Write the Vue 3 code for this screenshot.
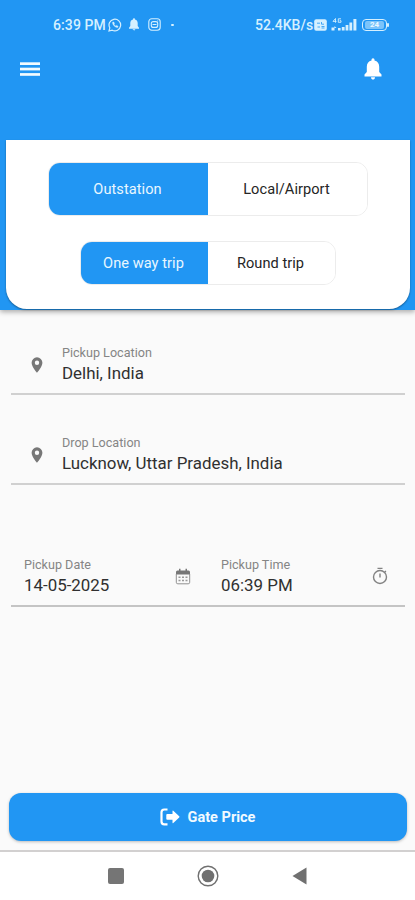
<script setup>
import { ref } from 'vue'

const area = ref('Outstation')
const trip = ref('One way trip')
const locations = [
  { label: 'Pickup Location', value: 'Delhi, India' },
  { label: 'Drop Location', value: 'Lucknow, Uttar Pradesh, India' },
]
</script>

<template>
  <div class="screen">
    <header class="top">
      <div class="status">
        <span class="clock">6:39 PM</span>
        <svg class="whatsapp" width="14" height="14" viewBox="0 0 14 14" fill="none" stroke="currentColor">
          <path d="M1 13l.8-3.1A5.8 5.8 0 1 1 4.2 12.2z" stroke-width="1.2" />
          <path d="M4.7 4.1c-.7 2.4 2.4 5.7 5 5.3l.4-1.2-1.6-.8-.8.6c-.8-.3-1.4-1-1.7-1.7l.5-.8-.7-1.5z" fill="currentColor" stroke-width=".4" />
        </svg>
        <svg class="mini-bell" width="10" height="13" viewBox="0 0 10 13" fill="currentColor">
          <path d="M5 .3c.7 0 1 .5 1 1.1 1.800.5 2.700 1.800 2.700 3.700v3L10 9.800v1H0v-1l1.300-1.700v-3C1.300 3.200 2.200 1.900 4 1.400 4 .8 4.300.3 5 .3zM3.700 11.200h2.600C6.300 12.800 3.700 12.800 3.700 11.200z" />
        </svg>
        <svg class="insta" width="13" height="13" viewBox="0 0 13 13" fill="none" stroke="currentColor" stroke-width="1.1">
          <rect x=".8" y=".8" width="11.4" height="11.4" rx="3" />
          <rect x="3.3" y="3.6" width="6.4" height="5.8" rx="2" />
          <path d="M4.5 6.5h4M9.2 3h1" />
        </svg>
        <i class="dot"></i>
        <span class="speed">52.4KB/s</span>
        <svg class="volte" width="13" height="12" viewBox="0 0 13 12">
          <rect x=".2" y=".2" width="12.6" height="11.6" rx="2" fill="currentColor" />
          <path d="M3 4.200h3M7.500 3v2.200H10M3.500 8H6M7.500 7.500h3M7.500 9h3" stroke="#2196f3" stroke-width=".8" fill="none" />
        </svg>
        <svg class="signal" width="26" height="14" viewBox="0 0 26 14" fill="currentColor">
          <path d="M4.500.5v4.200M4.500.5L2 3.400h3.500M10 .8H7.300v3.500H10V2.700H8.700" fill="none" stroke="currentColor" stroke-width=".9" />
          <path d="M.5 9.500h3V8l2 2h-2v2.500h-3zM7 10h2.600v2.500H7zM10.800 9h2.800v3.500h-2.800zM14.600 7h2.800v5.500h-2.800zM18.400 4.500h2.800v8h-2.800zM22.400 1h3v11.500h-3z" />
        </svg>
        <span class="battery"><b>24</b></span>
      </div>

      <div class="bar">
        <button class="plain" aria-label="Menu">
          <svg width="20" height="15" viewBox="0 0 20 15" fill="#f2fbff">
            <rect y=".3" width="20" height="2.700" /><rect y="5.700" width="20" height="2.700" /><rect y="11.100" width="20" height="2.700" />
          </svg>
        </button>
        <button class="plain" aria-label="Notifications">
          <svg width="18" height="22" viewBox="0 0 18 22" fill="#fff">
            <path d="M9 .3c1 0 1.500.7 1.500 1.700v.6c3.100.7 4.700 3 4.700 6.200v5.300l2.300 2.500v1.800H.5v-1.800l2.300-2.500V8.800c0-3.200 1.600-5.500 4.700-6.200V2C7.500 1 8 .3 9 .3zM7 19.200h4C11 22.300 7 22.300 7 19.200z" />
          </svg>
        </button>
      </div>

      <section class="card">
        <div class="toggle large">
          <button v-for="o in ['Outstation', 'Local/Airport']" :key="o" :class="{ on: area === o }" @click="area = o">{{ o }}</button>
        </div>
        <div class="toggle small">
          <button v-for="o in ['One way trip', 'Round trip']" :key="o" :class="{ on: trip === o }" @click="trip = o">{{ o }}</button>
        </div>
      </section>
    </header>

    <main class="form">
      <div v-for="l in locations" :key="l.label" class="field">
        <svg class="pin" width="12" height="16" viewBox="0 0 12 16" fill="#777">
          <path fill-rule="evenodd" d="M6 .3A5.400 5.400 0 0 0 .6 5.700C.6 9.700 6 15.700 6 15.700s5.400-6 5.400-10A5.400 5.400 0 0 0 6 .3zm0 3.300a2.200 2.200 0 1 1 0 4.400 2.200 2.200 0 0 1 0-4.400z" />
        </svg>
        <div class="text"><label>{{ l.label }}</label><p>{{ l.value }}</p></div>
      </div>

      <div class="when">
        <div class="text date"><label>Pickup Date</label><p>14-05-2025</p></div>
        <svg class="calendar" width="16" height="17" viewBox="0 0 16 17">
          <path d="M1 6.500V4q0-1.500 1.500-1.500H4V.8h1.500v1.700h5V.8H12v1.700h1.500Q15 2.500 15 4v2.500z" fill="#777" />
          <path d="M1.300 6v8.300q0 1.500 1.500 1.500h10.400q1.500 0 1.500-1.500V6" fill="none" stroke="#909090" />
          <path d="M3.500 9.200h9M3.500 12.500h9" stroke="#999" stroke-width="1.500" stroke-dasharray="2 1.500" />
        </svg>
        <div class="text time"><label>Pickup Time</label><p>06:39 PM</p></div>
        <svg class="timer" width="16" height="18" viewBox="0 0 16 18" fill="none" stroke="#828282" stroke-width="1.400">
          <circle cx="8" cy="10" r="6.500" />
          <path d="M5.500 1.400h5M12.600 5.200l1.300-1.300M8 6.500v4" />
        </svg>
      </div>
    </main>

    <div class="action">
      <button class="price">
        <svg width="20" height="18" viewBox="0 0 20 18">
          <path d="M7.500 1.500H4.300Q1.500 1.500 1.500 4.300v9.200q0 2.800 2.800 2.800h3.200" fill="none" stroke="#fff" stroke-width="2.200" />
          <path d="M7.200 6.100h5.300V3q0-.8.800-.3l5.900 5.600q.6.600 0 1.200l-5.900 5.600q-.8.500-.8-.3v-3.100H7.200q-.9 0-.9-.9V7q0-.9.900-.9z" fill="#fff" />
        </svg>
        <span>Gate Price</span>
      </button>
    </div>

    <nav class="system">
      <i class="square"></i>
      <svg class="home" width="22" height="22" viewBox="0 0 22 22">
        <circle cx="11" cy="11" r="9.800" fill="none" stroke="#707070" stroke-width="1.400" />
        <circle cx="11" cy="11" r="6.300" fill="#707070" />
      </svg>
      <svg class="back" width="15" height="18" viewBox="0 0 15 18"><path d="M.5 9L14.500.5v17z" fill="#707070" /></svg>
    </nav>
  </div>
</template>

<style>
body { margin: 0; }
</style>

<style scoped>
* { box-sizing: border-box; }
button { font: inherit; border: 0; margin: 0; padding: 0; cursor: pointer; }
p { margin: 0; }
svg { display: block; flex: none; }
.screen { width: 415px; height: 900px; overflow: hidden; display: flex; flex-direction: column; background: #fafafa; font-family: Roboto, sans-serif; }
.top { height: 310px; flex: none; padding: 14px 5px 0 6px; background: #2196f3; box-shadow: 0 2px 5px rgba(0, 0, 0, .32); }
.status { height: 22px; display: flex; align-items: center; padding-left: 47px; color: #d5f0ff; white-space: nowrap; }
.clock { width: 55px; font-size: 14px; font-weight: 500; letter-spacing: .1px; }
.whatsapp { margin-top: -1px; }
.mini-bell { margin-left: 7px; margin-top: -1px; }
.insta { margin-left: 9px; margin-top: -1px; }
.dot { width: 3px; height: 2px; margin-left: 10px; margin-top: -1px; border-radius: 1px; background: currentColor; }
.speed { width: 59px; margin-left: 81px; font-size: 14px; font-weight: 500; }
.volte { margin-left: 0; }
.signal { margin-left: 4px; margin-top: -1px; }
.battery { position: relative; width: 25px; height: 12px; margin-left: 5px; margin-top: -1px; border: 1px solid currentColor; border-radius: 4px; display: grid; place-items: center; }
.battery b { width: 19px; height: 8px; background: #7cc4fa; border-radius: 2px; color: #eaf8ff; font-size: 8px; line-height: 8px; text-align: center; }
.battery::after { content: ''; position: absolute; right: -3px; top: 3px; width: 2px; height: 4px; background: currentColor; border-radius: 1px; }
.bar { height: 66px; display: flex; justify-content: space-between; align-items: center; padding: 0 28px 0 14px; }
.plain { background: none; }
.card { height: 169px; margin-top: 38px; padding: 22px 42px 0 42px; display: flex; flex-direction: column; align-items: center; background: #fff; border-radius: 0 0 21px 21px; box-shadow: 0 1px 2px rgba(0, 0, 0, .4); }
.toggle { display: flex; border: 1px solid #ececec; border-radius: 12px; overflow: hidden; font-size: 14.6px; }
.toggle button { flex: 1; padding-right: 2px; background: #fff; color: #252525; letter-spacing: .05px; }
.toggle .on { background: #2196f3; color: #e9f7ff; }
.large { width: 320px; height: 54px; }
.small { width: 256px; height: 44px; margin-top: 25px; }
.form { flex: 1; padding: 30px 10px 0 11px; }
.field { height: 55px; display: flex; padding-left: 20px; border-bottom: 2px solid #d0d0d0; }
.field + .field { margin-top: 35px; }
.pin { margin-top: 17px; }
.field .text { margin-left: 19px; }
.text { padding-top: 5px; white-space: nowrap; }
.text label { display: block; font-size: 12.6px; line-height: 16px; color: #858585; }
.text p { font-size: 16.9px; line-height: 25px; color: #303030; }
.when { height: 57px; margin-top: 65px; padding-left: 13px; display: flex; border-bottom: 2px solid #c4c4c4; }
.when .text { padding-top: 7px; }
.date { width: 151px; }
.calendar { margin-top: 18px; }
.time { margin-left: 30px; width: 150px; }
.timer { margin-top: 17px; margin-left: 1px; }
.action { height: 57px; padding: 0 8px 0 9px; }
.price { width: 100%; height: 48px; padding-right: 1px; display: flex; align-items: center; justify-content: center; gap: 8px; border-radius: 12px; background: #2196f3; color: #f1faff; font-size: 14.5px; font-weight: 700; box-shadow: 0 1px 3px rgba(0, 0, 0, .25); }
.system { height: 50px; flex: none; display: flex; align-items: center; padding-left: 108px; background: #fff; border-top: 2px solid #d2d0d0; }
.square { width: 16px; height: 16px; border-radius: 2px; background: #757575; }
.home { margin-left: 73px; }
.back { margin-left: 73px; }
</style>
